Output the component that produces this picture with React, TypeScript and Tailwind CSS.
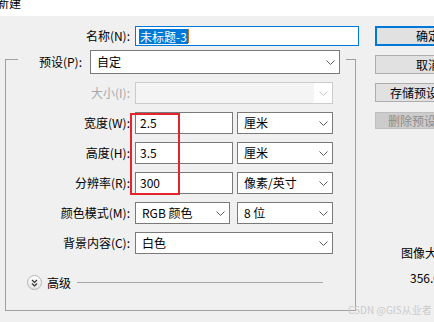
import React from "react";

const Chevron = ({ color = "#5c5c5c" }: { color?: string }) => (
  <svg width="9" height="5" viewBox="0 0 9 5" className="shrink-0">
    <path d="M0.5 0.5L4.5 4.5L8.5 0.5" fill="none" stroke={color} strokeWidth="1" />
  </svg>
);

const Label = ({ children, disabled }: { children: React.ReactNode; disabled?: boolean }) => (
  <div className={disabled ? "w-[124px] text-right text-[#a9a9a9] leading-[14px]" : "w-[124px] text-right leading-[14px]"}>{children}</div>
);

export default function App() {
  return (
    <div className="relative w-[434px] h-[322px] overflow-hidden bg-[#f0f0f0] text-[12px] text-black font-['Noto_Sans_CJK_SC',sans-serif]">
      <div className="h-[16px] bg-white overflow-hidden">
        <div className="-ml-[3px] -mt-[4px] leading-[14px]">新建</div>
      </div>
      <div className="flex">
        <div className="w-[375px] shrink-0">
          {/* name row */}
          <div className="mt-[10px] flex items-center h-[20px]">
            <div className="w-[130px] text-right leading-[14px]">名称(N):</div>
            <div className="ml-[5px] w-[224px] h-[20px] border border-[#0078d7] bg-white flex items-center pl-[3px]">
              <span className="bg-[#0078d7] text-white leading-[15px] px-[1px]">未标题-3</span>
              <span className="w-px h-[14px] bg-[#c07020]" />
            </div>
          </div>
          {/* group box */}
          <div className="mt-[13px] ml-[5px] w-[351px] h-[252px] border border-[#a0a0a0]">
            <div className="-mt-[10px] ml-[12px] w-[328px] h-[24px] bg-[#f0f0f0] flex items-center">
              <div className="w-[64px] text-right leading-[14px]">预设(P):</div>
              <div className="ml-[8px] w-[250px] h-[24px] border border-[#7a7a7a] bg-white flex items-center pl-[6px] pr-[4px]">
                <span className="flex-1 leading-[14px]">自定</span>
                <Chevron />
              </div>
            </div>
            {/* size */}
            <div className="mt-[8px] h-[22px] flex items-center">
              <Label disabled>大小(I):</Label>
              <div className="ml-[5px] w-[198px] h-[22px] border border-[#cccccc] bg-[#f4f4f4] flex">
                <div className="flex-1" />
                <div className="w-[18px] bg-white flex items-center justify-center">
                  <Chevron color="#c4c4c4" />
                </div>
              </div>
            </div>
            {/* width */}
            <div className="mt-[8px] h-[22px] flex items-center">
              <Label>宽度(W):</Label>
              <div className="ml-[5px] w-[98px] h-[22px] border border-[#7a7a7a] bg-white flex items-center pl-[4px] leading-[14px]">2.5</div>
              <div className="ml-[4px] w-[96px] h-[22px] border border-[#7a7a7a] bg-white flex items-center pl-[6px] pr-[4px]">
                <span className="flex-1 leading-[14px]">厘米</span>
                <Chevron />
              </div>
            </div>
            {/* height */}
            <div className="mt-[8px] h-[22px] flex items-center">
              <Label>高度(H):</Label>
              <div className="ml-[5px] w-[98px] h-[22px] border border-[#7a7a7a] bg-white flex items-center pl-[4px] leading-[14px]">3.5</div>
              <div className="ml-[4px] w-[96px] h-[22px] border border-[#7a7a7a] bg-white flex items-center pl-[6px] pr-[4px]">
                <span className="flex-1 leading-[14px]">厘米</span>
                <Chevron />
              </div>
            </div>
            {/* resolution */}
            <div className="mt-[8px] h-[22px] flex items-center">
              <Label>分辨率(R):</Label>
              <div className="ml-[5px] w-[98px] h-[22px] border border-[#7a7a7a] bg-white flex items-center pl-[4px] leading-[14px]">300</div>
              <div className="ml-[4px] w-[96px] h-[22px] border border-[#7a7a7a] bg-white flex items-center pl-[6px] pr-[4px]">
                <span className="flex-1 leading-[14px]">像素/英寸</span>
                <Chevron />
              </div>
            </div>
            {/* color mode */}
            <div className="mt-[8px] h-[22px] flex items-center">
              <Label>颜色模式(M):</Label>
              <div className="ml-[5px] w-[95px] h-[22px] border border-[#7a7a7a] bg-white flex items-center pl-[6px] pr-[4px]">
                <span className="flex-1 leading-[14px]">RGB 颜色</span>
                <Chevron />
              </div>
              <div className="ml-[7px] w-[96px] h-[22px] border border-[#7a7a7a] bg-white flex items-center pl-[6px] pr-[4px]">
                <span className="flex-1 leading-[14px]">8 位</span>
                <Chevron />
              </div>
            </div>
            {/* background */}
            <div className="mt-[8px] h-[22px] flex items-center">
              <Label>背景内容(C):</Label>
              <div className="ml-[5px] w-[198px] h-[22px] border border-[#7a7a7a] bg-white flex items-center pl-[6px] pr-[4px]">
                <span className="flex-1 leading-[14px]">白色</span>
                <Chevron />
              </div>
            </div>
            {/* advanced */}
            <div className="mt-[21px] h-[15px] flex items-center">
              <div className="ml-[21px] w-[15px] h-[15px] rounded-full border border-[#b4b4b4] bg-gradient-to-b from-white to-[#e4e4e4] flex items-center justify-center">
                <svg width="7" height="8" viewBox="0 0 7 8">
                  <path d="M1 1L3.5 3.5L6 1M1 4.5L3.5 7L6 4.5" fill="none" stroke="#333" strokeWidth="1.2" />
                </svg>
              </div>
              <div className="ml-[5px] leading-[14px]">高级</div>
              <div className="ml-[6px] w-[246px] h-px bg-[#a8a8a8]" />
            </div>
          </div>
        </div>
        {/* right column */}
        <div className="flex flex-col shrink-0">
          <div className="mt-[10px] w-[90px] h-[20px] border-2 border-[#0078d7] bg-[#e1e1e1] pl-[39px] flex items-center leading-[14px]">确定</div>
          <div className="mt-[9px] w-[90px] h-[19px] border border-[#adadad] bg-[#e1e1e1] pl-[40px] flex items-center leading-[14px]">取消</div>
          <div className="mt-[9px] w-[90px] h-[19px] border border-[#adadad] bg-[#e1e1e1] pl-[14px] flex items-center leading-[14px]">存储预设</div>
          <div className="mt-[10px] w-[90px] h-[17px] border border-[#bfbfbf] bg-[#cccccc] pl-[12px] flex items-center leading-[14px] text-[#8c8c8c]">删除预设</div>
          <div className="mt-[117px] pl-[26px] leading-[14px]">图像大小：</div>
          <div className="mt-[11px] pl-[35px] leading-[14px]">356.0K</div>
        </div>
      </div>
      {/* annotation */}
      <div className="absolute left-[130px] top-[113px] w-[50px] h-[82px] border-2 border-[#e5232b]" />
      <div className="absolute left-[348px] top-[303px] text-[10px] leading-[14px] text-[#cbcbcb] whitespace-nowrap">CSDN @GIS从业者</div>
    </div>
  );
}
